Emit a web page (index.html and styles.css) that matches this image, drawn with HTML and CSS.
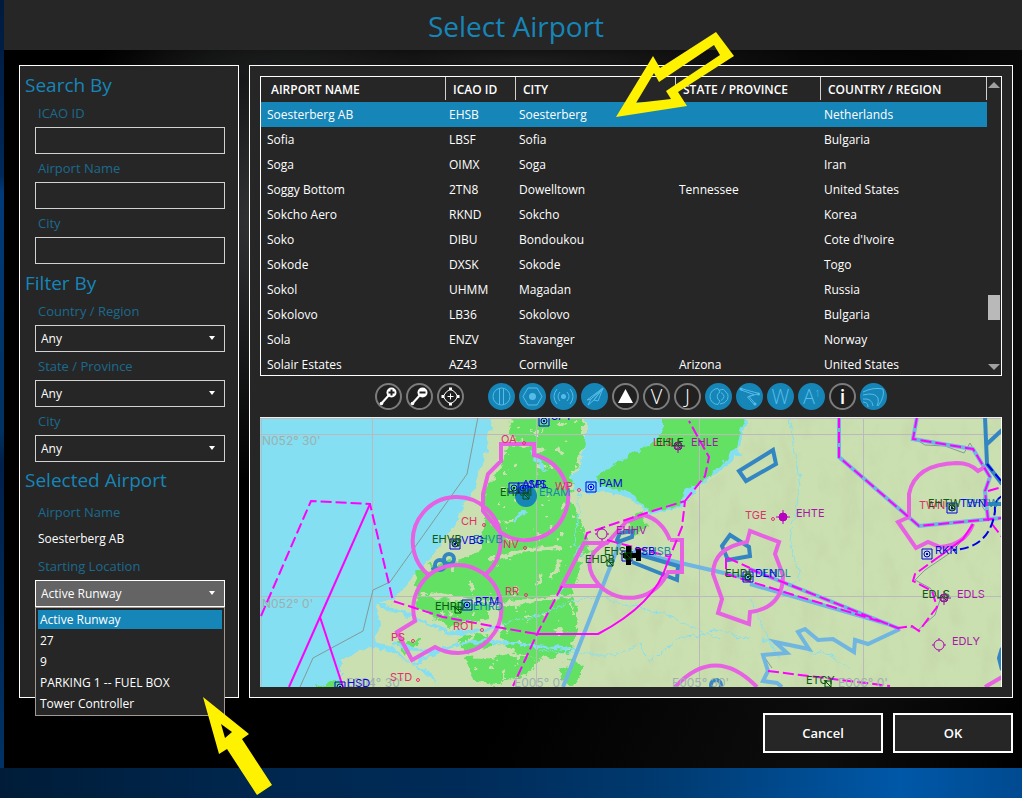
FILE: index.html
```html
<!DOCTYPE html>
<html lang="en">
<head>
<meta charset="utf-8">
<title>Select Airport</title>
<link rel="stylesheet" href="styles.css">
</head>
<body>
<div class="window">
  <header class="titlebar"><h1>Select Airport</h1></header>
  <main class="content">
    <form class="panel sidebar">
      <h2>Search By</h2>
      <div class="field"><label for="icao">ICAO ID</label><input id="icao" type="text"></div>
      <div class="field"><label for="name">Airport Name</label><input id="name" type="text"></div>
      <div class="field"><label for="city">City</label><input id="city" type="text"></div>
      <h2>Filter By</h2>
      <div class="field"><label for="country">Country / Region</label><div class="select"><select id="country"><option>Any</option></select></div></div>
      <div class="field"><label for="state">State / Province</label><div class="select"><select id="state"><option>Any</option></select></div></div>
      <div class="field"><label for="fcity">City</label><div class="select"><select id="fcity"><option>Any</option></select></div></div>
      <h2 class="last">Selected Airport</h2>
      <div class="field"><label for="selected">Airport Name</label><output id="selected">Soesterberg AB</output></div>
      <div class="field"><label for="start">Starting Location</label>
        <div class="select open"><select id="start"><option>Active Runway</option></select>
          <ul class="menu" role="listbox" aria-label="Starting Location">
            <li class="active" role="option" aria-selected="true">Active Runway</li>
            <li role="option">27</li>
            <li role="option">9</li>
            <li role="option">PARKING 1 -- FUEL BOX</li>
            <li role="option">Tower Controller</li>
          </ul>
        </div>
      </div>
    </form>

    <section class="panel results">
      <div class="grid">
        <table>
          <colgroup><col class="c-name"><col class="c-id"><col class="c-city"><col class="c-state"><col class="c-country"></colgroup>
          <thead><tr><th><span>AIRPORT NAME</span></th><th><span>ICAO ID</span></th><th><span>CITY</span></th><th><span>STATE / PROVINCE</span></th><th><span>COUNTRY / REGION</span></th></tr></thead>
          <tbody>
            <tr class="active"><td>Soesterberg AB</td><td>EHSB</td><td>Soesterberg</td><td></td><td>Netherlands</td></tr>
            <tr><td>Sofia</td><td>LBSF</td><td>Sofia</td><td></td><td>Bulgaria</td></tr>
            <tr><td>Soga</td><td>OIMX</td><td>Soga</td><td></td><td>Iran</td></tr>
            <tr><td>Soggy Bottom</td><td>2TN8</td><td>Dowelltown</td><td>Tennessee</td><td>United States</td></tr>
            <tr><td>Sokcho Aero</td><td>RKND</td><td>Sokcho</td><td></td><td>Korea</td></tr>
            <tr><td>Soko</td><td>DIBU</td><td>Bondoukou</td><td></td><td>Cote d'Ivoire</td></tr>
            <tr><td>Sokode</td><td>DXSK</td><td>Sokode</td><td></td><td>Togo</td></tr>
            <tr><td>Sokol</td><td>UHMM</td><td>Magadan</td><td></td><td>Russia</td></tr>
            <tr><td>Sokolovo</td><td>LB36</td><td>Sokolovo</td><td></td><td>Bulgaria</td></tr>
            <tr><td>Sola</td><td>ENZV</td><td>Stavanger</td><td></td><td>Norway</td></tr>
            <tr><td>Solair Estates</td><td>AZ43</td><td>Cornville</td><td>Arizona</td><td>United States</td></tr>
          </tbody>
        </table>
        <div class="scrollbar" aria-hidden="true">
          <svg width="12" height="6" viewBox="0 0 12 6"><path d="M6 0 12 6H0z"/></svg>
          <div class="track"><div class="thumb"></div></div>
          <svg width="12" height="6" viewBox="0 0 12 6"><path d="M0 0H12L6 6z"/></svg>
        </div>
      </div>

      <div class="toolbar">
        <button type="button" class="tool" aria-label="Zoom in"><svg viewBox="0 0 27 27"><path class="stem" d="M6 21 14 12"/><circle class="solid" cx="16.500" cy="9.500" r="5"/><circle class="solid" cx="6.500" cy="20.500" r="1.800"/><path class="dark" d="M13.500 9.500h6M16.500 6.500v6"/></svg></button>
        <button type="button" class="tool" aria-label="Zoom out"><svg viewBox="0 0 27 27"><path class="stem" d="M6 21 14 12"/><circle class="solid" cx="16.500" cy="9.500" r="5"/><circle class="solid" cx="6.500" cy="20.500" r="1.800"/><path class="dark" d="M13.500 9.500h6"/></svg></button>
        <button type="button" class="tool" aria-label="Center map"><svg viewBox="0 0 27 27"><path d="M13.500 6 Q18 8 21 13.500 18 19 13.500 21 9 19 6 13.500 9 8 13.500 6M13.500 10.500v6M10.500 13.500h6"/><path class="solid" d="M12 4.500h3v3h-3zM12 19.500h3v3h-3zM4.500 12h3v3h-3zM19.500 12h3v3h-3z"/></svg></button>
        <span class="spacer"></span>
        <button type="button" class="tool on" aria-label="Airports"><svg viewBox="0 0 27 27"><circle cx="13.500" cy="13.500" r="8.500"/><path d="M11.500 5.500v16M15.500 5.500v16"/></svg></button>
        <button type="button" class="tool on" aria-label="VORs"><svg viewBox="0 0 27 27"><path d="M9 5h9l5 8.500-5 8.500H9L4 13.500z"/><circle class="solid" cx="13.500" cy="13.500" r="3.500"/></svg></button>
        <button type="button" class="tool on" aria-label="NDBs"><svg viewBox="0 0 27 27"><circle class="solid" cx="13.500" cy="13.500" r="2.500"/><path d="M10 9q-4 4.500 0 9M17 9q4 4.500 0 9M7 6q-6 7.500 0 15M20 6q6 7.500 0 15"/></svg></button>
        <button type="button" class="tool on" aria-label="Approaches"><svg viewBox="0 0 27 27"><path d="M22 5 6 17l4-1zM22 5 10 16l-3 6 6-5zM22 5 13 17l4 1z"/></svg></button>
        <button type="button" class="tool" aria-label="Intersections"><svg viewBox="0 0 27 27"><path class="solid" d="M13.500 6 21 20H6z"/></svg></button>
        <button type="button" class="tool" aria-label="Victor airways">V</button>
        <button type="button" class="tool" aria-label="Jet airways">J</button>
        <button type="button" class="tool on" aria-label="Airspace"><svg viewBox="0 0 27 27"><path d="M13 5.500A8 8 0 0 0 13 21.500L15 18A5 5 0 0 1 15 9zM14 7.500q5-3 7 2 3 1 1.500 7-2 4-7.500 4.500M16 9.500q6 4 0 8"/></svg></button>
        <button type="button" class="tool on" aria-label="Flight plan"><svg viewBox="0 0 27 27"><path d="M5 5.500 23 10.500 13 13.500 19.500 21"/><path d="M5 7 18 11.500 11.500 14 18 21.500"/><circle class="solid" cx="5" cy="6" r="1.500"/><circle class="solid" cx="22.500" cy="11" r="1.500"/><circle class="solid" cx="19" cy="21" r="1.500"/></svg></button>
        <button type="button" class="tool on" aria-label="Weather">W</button>
        <button type="button" class="tool on" aria-label="Aircraft">A<sup>1</sup></button>
        <button type="button" class="tool info" aria-label="Information">i</button>
        <button type="button" class="tool on" aria-label="Terrain"><svg viewBox="0 0 27 27"><path d="M3 9Q13 4 23 6q2 8-5 17M3 12q12-3 15 3 1 4-1 8M3 16q9-1 10 7M3 19q5 0 5 5"/></svg></button>
      </div>

      <svg class="map" viewBox="260 418 741 269" preserveAspectRatio="xMidYMid slice" role="img" aria-label="Map around Soesterberg AB">
        <defs>
          <filter id="rough" x="-5%" y="-5%" width="110%" height="110%">
            <feTurbulence type="fractalNoise" baseFrequency="0.12" numOctaves="3" seed="4" result="n"/>
            <feDisplacementMap in="SourceGraphic" in2="n" scale="9" xChannelSelector="R" yChannelSelector="G"/>
          </filter>
          <filter id="speckle" x="-5%" y="-5%" width="110%" height="110%">
            <feTurbulence type="fractalNoise" baseFrequency="0.09 0.11" numOctaves="5" seed="21" result="n"/>
            <feDisplacementMap in="SourceGraphic" in2="n" scale="14" xChannelSelector="R" yChannelSelector="G" result="d"/>
            <feColorMatrix in="n" type="matrix" values="0 0 0 0 0  0 0 0 0 0  0 0 0 0 0  0 0 -30 0 22" result="m"/>
            <feComposite in="d" in2="m" operator="in"/>
          </filter>
          <filter id="relief" x="0" y="0" width="100%" height="100%">
            <feTurbulence type="fractalNoise" baseFrequency="0.05 0.03" numOctaves="4" seed="3"/>
            <feColorMatrix type="matrix" values="0 0 0 0 0.45  0 0 0 0 0.55  0 0 0 0 0.35  1.6 0 0 0 -0.72" result="t"/>
            <feComposite in="t" in2="SourceGraphic" operator="in"/>
          </filter>
          <g id="vor"><path class="navy" d="M-5-5H5V5H-5z"/><circle class="navy" r="3"/><path class="navyfill" d="M-1-1H1V1H-1z"/></g>
          <g id="apt"><path class="dgreen" d="M-3-3H3V3H-3zM-3-3 3 3"/></g>
          <circle id="ndb" class="ndb" r="1.500"/>
        </defs>
        <rect class="sea" x="260" y="417" width="742" height="270"/>
        <g filter="url(#rough)">
          <path class="land" d="M495 400 488 444 475 487 450 531 431 557 395 599 376 604 380 622 376 643 391 647 412 664 430 672 450 700H1020V400z"/>
          <path class="land" d="M311 700 341 684V659L371 647 391 652 410 663 440 685V700z"/>
          <path class="sea" d="M587 400V434L580 467 570 478 573 489 590 494 603 492 627 497 647 511 652 514 682 507 700 490 737 455 748 417 742 400z"/>
          <path class="land" d="M683 500 700 478 737 445 760 440 760 500z"/>
          <path class="sea" d="M683 500 680 485 705 470 735 440 740 455 705 482z"/>
        </g>
        <path class="relief" filter="url(#relief)" d="M590 540 660 514 740 460 750 417H1002V687H590z"/>
        <g class="green" filter="url(#speckle)">
          <path d="M508 405H585V442L573 474 572 500 582 530 590 548 580 570 572 596 576 625 572 655 535 652 500 642 505 616 490 600 470 596 440 600 415 594 450 565 478 552 486 525 480 500 500 465 512 440z"/>
          <path d="M500 610 540 600 578 605 574 650 540 660 505 650zM415 570 450 560 490 570 490 620 450 625 418 610z"/>
          <path d="M418 640 405 655 396 640zM495 655 540 658 530 672 500 682zM465 658 500 660 500 687 475 682zM570 660 585 665 575 687 560 680zM455 640 480 630 500 645 470 655zM315 684 335 680 350 690H315z"/>
          <path d="M625 520 640 512 648 528 632 535z"/>
        </g>
        <path class="green" filter="url(#rough)" d="M663 400V434L633 454 597 476 600 484 630 492 650 512 680 506 682 493 712 476 735 448 745 417V400z"/>
        <g filter="url(#rough)">
          <path class="paleriver" d="M500 558 530 550 560 548M490 440 530 445 M430 595 500 604 570 596M560 560 550 580"/>
          <path class="river wide" d="M376 604 420 620 450 634 500 628M392 645 430 652 480 640 540 646 580 650M412 664 445 648M530 450 545 470M515 520 525 512"/>
          <path class="river" d="M500 625 540 615 575 600 600 596 625 604 660 612 720 640M560 600 570 565 585 540M540 650 580 655 615 655 640 645 650 662 675 640 720 630 750 640M580 490 575 540 590 570M790 417 795 450 800 480 790 540 800 580 770 600M750 600 765 630 780 660M760 640 830 655 850 670"/>
        </g>
        <path class="gridline" d="M260 418.500H1002M261.500 417V687M372.500 417V687M536.500 417V687M699.500 417V687M863.500 417V687M260 434.500H1002M260 596.500H1002"/>
        <path class="boundary" d="M478 417 467 474 390 582 373 590 363 631 313 658 300 687M915 439 925 445 945 446 964 453 970 443 975 452M973 524 965 538 950 553 925 570 915 580 930 588 940 600 935 615 918 630 910 627M763 655 772 668M985 494 982 506 990 518"/>

        <path class="route" d="M620 542 563 687M633 552 750 579M750 569 900 629M750 584 888 624M900 629 868 644 855 640 854 652 833 639 818 640 805 629 798 632 809 649 775 642 787 653 763 655 768 671 763 681 777 683 782 687M839 417V457L919 526 1002 518M917 417 913 439 973 449 990 477 985 491 988 519"/>
        <path class="area" d="M739 471 773 450 776 464 746 481zM722 546 730 535 749 547 750 556 728 560zM637 554 678 566 677 580 632 562M617 540 620 533 633 531 632 537 618 542zM985 417 987 464 1002 484M987 444 1002 430M987 504H1002M1002 648 999 658 1002 670"/>
        <g class="area"><circle cx="449" cy="559" r="5"/><circle cx="440" cy="565" r="5"/><path d="M432 570 436 567"/><circle cx="716" cy="685" r="5"/></g>
        <circle class="disc" cx="526" cy="496" r="11"/>
        <path class="ctr" d="M483 511V494L488 474 501 461V444H534V455A43 43 0 1 1 500 532zM430 576A44 44 0 1 1 487 573L484 576M415 621A44 44 0 1 1 458 653Q445 653 435 647L412 660 397 632zM670 540H682V572H668A42 42 0 0 1 600 586H562L584 543H607L626 522 644 515Q662 520 670 540M607 542Q576 560 600 586M747 542Q713 548 713 574L722 599 718 613 749 624 750 612Q783 608 783 575L775 554 779 542 750 531zM909 517V494Q915 464 957 463 970 463 978 471L985 467M909 517 898 522 916 548 928 542 940 547Q965 545 973 524M675 687Q715 644 757 687M985 687 1002 677"/>
        <path class="mag" d="M289 687 320 617 370 504M320 617 343 687M537 634H598Q655 604 667 564M973 524 963 539 940 556"/>
        <path class="mag dash" d="M261 616 311 501 370 504 393 601 443 617 508 629 537 634M562 586 537 634 513 686M667 564 682 527 685 501 643 514 587 533 584 543M685 501 705 476 709 457 689 421M607 540 670 557M750 569 900 629M728 558 750 568M726 574 888 624M726 558V576M839 417V457L919 526 1002 518M917 417 913 439 973 449 990 477 985 491 988 519 1002 537M940 556 915 574 913 581 932 591 937 607 919 631 912 626 898 628M768 671 890 686M988 491 1002 487"/>
        <path class="navy dash2" d="M987 464 1002 482M1002 496Q994 500 995 511 990 548 953 550"/>

        <use href="#vor" x="544" y="421"/><use href="#vor" x="514" y="488"/><use href="#vor" x="523" y="488"/><use href="#vor" x="591" y="487"/><use href="#vor" x="455" y="544"/><use href="#vor" x="467" y="605"/><use href="#vor" x="340" y="687"/><use href="#vor" x="627" y="556"/><use href="#vor" x="748" y="577"/><use href="#vor" x="952" y="508"/><use href="#vor" x="927" y="554"/>
        <use href="#apt" x="526" y="496"/><use href="#apt" x="456" y="543"/><use href="#apt" x="458" y="610"/><use href="#apt" x="610" y="563"/><use href="#apt" x="678" y="446"/><use href="#apt" x="748" y="577"/><use href="#apt" x="952" y="507"/><use href="#apt" x="944" y="598"/><use href="#apt" x="828" y="684"/>
        <use href="#ndb" x="524" y="443"/><use href="#ndb" x="484" y="525"/><use href="#ndb" x="579" y="490"/><use href="#ndb" x="525" y="548"/><use href="#ndb" x="526" y="595"/><use href="#ndb" x="482" y="630"/><use href="#ndb" x="413" y="641"/><use href="#ndb" x="418" y="680"/><use href="#ndb" x="773" y="519"/>
        <g class="purple"><circle class="full" cx="783" cy="517" r="4"/><path d="M776 517H790M783 510V524"/><circle cx="602" cy="534" r="5"/><path d="M595 534H597M607 534H609M602 527V529M602 539V541"/><circle cx="939" cy="645" r="5"/><path d="M932 645H934M944 645H946M939 638V640M939 650V652"/><circle cx="678" cy="446" r="4"/><path d="M671 446H685M678 439V453"/><circle cx="944" cy="598" r="4"/><path d="M937 598H951M944 591V605"/></g>

        <g class="t-grid"><text x="262" y="445">N052° 30'</text><text x="262" y="608">N052° 0'</text><text x="346" y="687">E004° 30'</text><text x="514" y="687">E005° 0'</text><text x="672" y="687">E005° 30'</text><text x="838" y="687">E006° 0'</text></g>
        <g class="t-teal"><text x="473" y="543">EHVB</text><text x="473" y="610">EHRD</text><text x="539" y="496">ERAM</text><text x="642" y="555">EHSB</text><text x="762" y="577">EHDL</text><text x="966" y="507">EHTW</text></g>
        <g class="t-red"><text x="501" y="443">OA</text><text x="461" y="525">CH</text><text x="555" y="490">WP</text><text x="503" y="548">NV</text><text x="505" y="595">RR</text><text x="453" y="630">ROT</text><text x="391" y="641">PS</text><text x="390" y="681">STD</text><text x="745" y="519">TGE</text><text x="653" y="446">LLS</text><text x="919" y="509">TWN</text></g>
        <g class="t-green"><text x="500" y="496">EHAM</text><text x="432" y="543">EHVB</text><text x="435" y="610">EHRD</text><text x="585" y="563">EHDB</text><text x="604" y="555">EHSB</text><text x="656" y="446">EHLE</text><text x="725" y="577">EHDL</text><text x="928" y="507">EHTW</text><text x="922" y="598">EDLS</text><text x="806" y="684">ETGY</text></g>
        <g class="t-blue"><text x="551" y="420">SPY</text><text x="522" y="488">AMS</text><text x="528" y="488">SPL</text><text x="599" y="487">PAM</text><text x="461" y="544">VBG</text><text x="475" y="605">RTM</text><text x="347" y="687">HSD</text><text x="634" y="555">SSB</text><text x="755" y="577">DLN</text><text x="960" y="507">TWN</text><text x="935" y="554">RKN</text></g>
        <g class="t-purple"><text x="691" y="446">EHLE</text><text x="616" y="534">EHHV</text><text x="796" y="517">EHTE</text><text x="957" y="598">EDLS</text><text x="952" y="645">EDLY</text></g>
        <path class="plane" d="M623 553H626V546H631V553H636V549H641V561H636V558H631V565H626V558H623z"/>
        <use href="#apt" x="628" y="556"/>
      </svg>
    </section>
  </main>
  <footer class="actions"><button type="button">Cancel</button><button type="button">OK</button></footer>
</div>

<svg class="arrow arrow-row" width="118" height="86" viewBox="616 32 118 86" aria-hidden="true"><path d="M616 117 653 56 660 68 716 32 734 56 678 92 687 106zM636 103 671 99 666 91 720 55 714 45 659 82 654 73z"/></svg>
<svg class="arrow arrow-menu" width="70" height="98" viewBox="203 697 70 98" aria-hidden="true"><path d="M203 697 249 734 242 739 272 785 257 795 227 749 219 754zM221 724 225 738 232 732z"/></svg>
</body>
</html>
```
FILE: styles.css
```css
* { box-sizing: border-box; }
body {
  margin: 0;
  min-height: 100vh;
  padding: 0 0 30px 4px;
  display: flex;
  position: relative;
  font: 12px/16px "Open Sans", "Noto Sans", sans-serif;
  color: #fff;
  background:
    linear-gradient(90deg, #001c38 0%, #00264c 22%, #002b58 45%, #003a70 65%, #0058a8 88%, #004a90 100%) bottom / 100% 30px no-repeat,
    linear-gradient(#001a3c, #00285a 22%, #003a78 24%, #003262 54%, #00204a 58%, #003468);
}
.window {
  flex: 1;
  min-width: 0;
  display: flex;
  flex-direction: column;
  background:
    radial-gradient(ellipse 200px 260px at 250px 220px, #303234, transparent),
    radial-gradient(ellipse 400px 30px at 520px 60px, #1c1c1c, transparent),
    linear-gradient(115deg, #000 60%, #0d0d0d 85%, #000);
}
.titlebar {
  height: 50px;
  padding-left: 6px;
  background: #262626;
  text-align: center;
}
h1 {
  margin: 0;
  font-size: 28px;
  line-height: 52px;
  font-weight: 400;
  color: #1685b8;
}
.content {
  flex: 1;
  padding: 15px 9px 15px 15px;
  display: flex;
  gap: 10px;
}
.panel { border: 1px solid #fff; background: #262626; }

.sidebar { width: 220px; flex: none; padding: 0 13px 0 15px; }
h2 {
  margin: 0 0 0 -10px;
  height: 33px;
  padding-top: 6px;
  font-size: 19px;
  line-height: 26px;
  font-weight: 400;
  color: #1685b8;
}
h2.last { height: 36px; padding-top: 5px; }
.field label {
  display: block;
  height: 28px;
  padding: 4px 0 0 3px;
  font-size: 13px;
  line-height: 20px;
  color: #1b6a8e;
}
.field input, .select select {
  display: block;
  width: 100%;
  height: 27px;
  margin: 0;
  padding: 0 5px;
  border: 1px solid #d2d2d2;
  border-radius: 0;
  background: #262626;
  color: #fff;
  font: inherit;
  appearance: none;
}
.field output { display: block; height: 26px; padding: 5px 0 0 3px; }
.select { position: relative; }
.select::after {
  content: "";
  position: absolute;
  right: 10px;
  top: 11px;
  border: solid transparent;
  border-width: 4px 3px 0;
  border-top-color: #fff;
}
.open select { background: #646464; border-color: #fff; }
.menu {
  position: absolute;
  top: 100%;
  left: 0;
  right: 0;
  margin: 0;
  padding: 2px;
  display: grid;
  gap: 2px;
  list-style: none;
  border: 1px solid #a09a92;
  background: #262626;
}
.menu li { padding: 0 2px; line-height: 19px; }
.menu .active { background: #1685b8; }

.results { flex: 1; min-width: 0; padding: 10px; display: flex; flex-direction: column; }
.grid {
  display: flex;
  height: 300px;
  overflow: hidden;
  border: 1px solid #fff;
}
table { flex: 1; table-layout: fixed; border-collapse: collapse; width: 100%; align-self: flex-start; }
.c-name { width: 185px; }
.c-id { width: 70px; }
.c-city { width: 160px; }
.c-state { width: 145px; }
th, td { height: 25px; padding: 0 0 0 3px; text-align: left; white-space: nowrap; }
td:first-child { padding-left: 6px; }
th { padding: 0 0 2px; font-size: 12px; font-weight: 600; }
th span { display: block; height: 23px; padding-left: 7px; line-height: 25px; border-right: 1px solid #d0d0d0; }
th:first-child span { padding-left: 10px; }
tr.active { background: #1685b8; }
.scrollbar {
  width: 14px;
  padding: 5px 1px 5px 0;
  display: flex;
  flex-direction: column;
  align-items: center;
  fill: #a0a0a0;
}
.track { flex: 1; width: 12px; display: flex; flex-direction: column; justify-content: flex-end; padding-bottom: 44px; }
.thumb { height: 25px; background: #b9b9b9; }

.toolbar { height: 41px; display: flex; align-items: center; justify-content: center; gap: 4px; }
.spacer { width: 16px; }
.tool {
  width: 27px;
  height: 27px;
  padding: 0;
  display: flex;
  align-items: center;
  justify-content: center;
  border: 2px solid #7c7c7c;
  border-radius: 50%;
  background: #202020;
  color: #fff;
  font: 300 20px/20px "Open Sans", sans-serif;
}
.tool svg { flex: none; width: 27px; height: 27px; fill: none; stroke: currentColor; }
.tool .solid { fill: currentColor; stroke: none; }
.tool .stem { stroke-width: 2; }
.tool .dark { stroke: #202020; stroke-width: 2; }
.tool.on { border-color: #1685b8; background: #1685b8; color: #55bce8; }
.tool sup { font-size: 9px; line-height: 9px; align-self: flex-start; padding-top: 4px; }
.tool.info { font-weight: 600; }

.map { display: block; width: 100%; height: 270px; border-top: 1px solid #eee; border-right: 1px solid #fff; overflow: hidden; }
.map path, .map circle { fill: none; }
.map .sea { fill: #84dff2; }
.map .land { fill: #cbe0b0; }
.map .relief { fill: #000; opacity: .35; }
.map g.green path, .map path.green { fill: #62e162; }
.map .paleriver { stroke: #cbe0b0; stroke-width: 4; }
.map .river { stroke: #84dff2; stroke-width: 1; }
.map .river.wide { stroke-width: 3; }
.gridline { stroke: #bcb9bc; }
.boundary { stroke: #849a98; stroke-width: 1; }
.route { stroke: #70b6e0; stroke-width: 4; }
.area { stroke: #3386c2; stroke-width: 4; }
.map .disc { fill: #1685b8; }
.ctr { stroke: #e662e2; stroke-width: 4; }
.mag { stroke: #f0f; stroke-width: 2; }
.dash { stroke-dasharray: 11 4; }
.navy { stroke: #0000e8; stroke-width: 1; }
.dash2 { stroke-width: 2; stroke-dasharray: 9 4; }
.map .navyfill { fill: #0000e8; }
.dgreen { stroke: #005000; stroke-width: 1; }
.ndb { stroke: #e83070; stroke-width: 1; }
.purple { stroke: #b000b8; }
.map .full { fill: #c000c8; }
.map .plane { fill: #000; }
.map text { font: 11px Inter, sans-serif; }
.t-grid { fill: #9db0b0; }
.map .t-grid text { font: 12px Inter, sans-serif; }
.t-teal { fill: #1c88a8; }
.t-red { fill: #e0306c; }
.t-green { fill: #0c5a14; }
.t-blue { fill: #0808e0; }
.t-purple { fill: #a818a8; }

.actions { display: flex; justify-content: flex-end; gap: 10px; padding: 0 9px 15px; }
.actions button {
  width: 120px;
  height: 40px;
  border: 2px solid #fff;
  background: #262626;
  color: #fff;
  font: 600 13px/20px "Open Sans", sans-serif;
}
.arrow { position: absolute; fill: #fff200; fill-rule: evenodd; pointer-events: none; }
.arrow-row { left: 616px; top: 32px; }
.arrow-menu { left: 203px; top: 697px; }
```
